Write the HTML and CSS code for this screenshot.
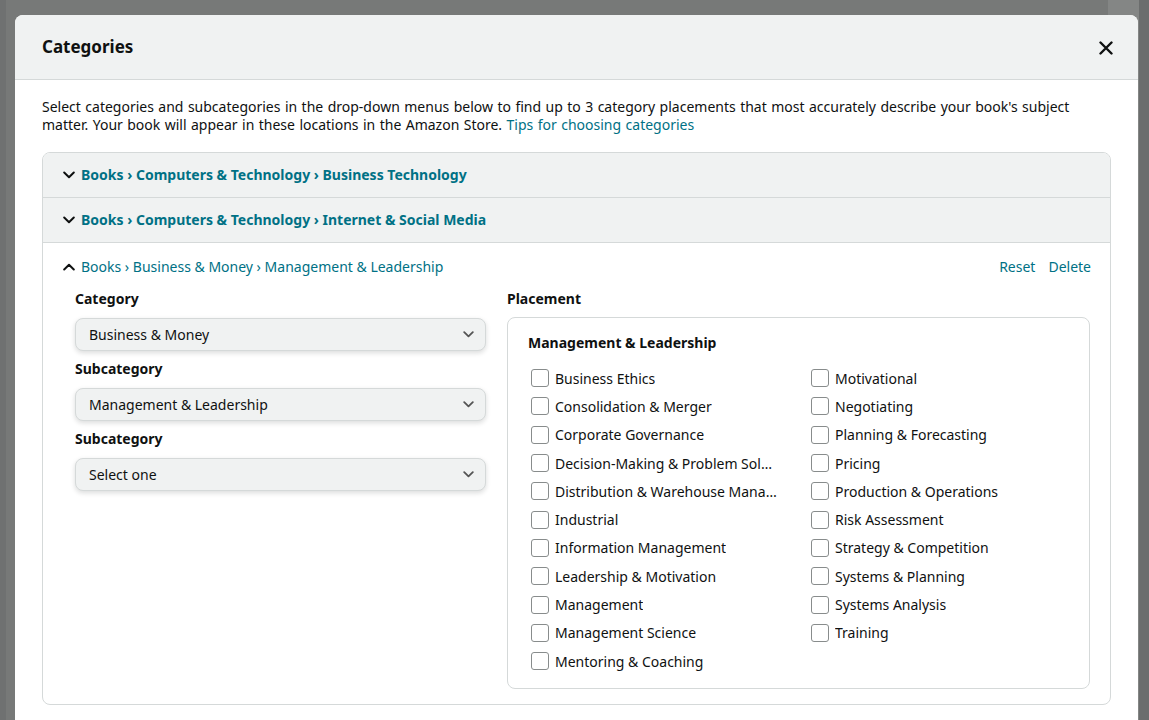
FILE: index.html
```html
<!DOCTYPE html>
<html lang="en">
<head>
<meta charset="utf-8">
<title>Categories</title>
<link rel="stylesheet" href="styles.css">
</head>
<body>
<div class="modal">
  <div class="modal-header">
    <h2 class="modal-title">Categories</h2>
    <button class="close-btn" aria-label="Close">
      <svg width="14" height="14" viewBox="0 0 14 14"><path d="M1.5 1.5 L12.5 12.5 M12.5 1.5 L1.5 12.5" stroke="#0f1111" stroke-width="2.4" stroke-linecap="round" fill="none"/></svg>
    </button>
  </div>
  <div class="modal-body">
    <p class="intro">Select categories and subcategories in the drop-down menus below to find up to 3 category placements that most accurately describe your book's subject matter. Your book will appear in these locations in the Amazon Store. <a href="#" class="link">Tips for choosing categories</a></p>

    <div class="accordion">
      <div class="acc-row">
        <svg class="chev" width="12" height="8" viewBox="0 0 12 8"><path d="M1.2 1.5 L6 6.2 L10.8 1.5" stroke="#0f1111" stroke-width="2" fill="none" stroke-linecap="round" stroke-linejoin="round"/></svg>
        <span class="acc-title">Books › Computers &amp; Technology › Business Technology</span>
      </div>
      <div class="acc-row">
        <svg class="chev" width="12" height="8" viewBox="0 0 12 8"><path d="M1.2 1.5 L6 6.2 L10.8 1.5" stroke="#0f1111" stroke-width="2" fill="none" stroke-linecap="round" stroke-linejoin="round"/></svg>
        <span class="acc-title">Books › Computers &amp; Technology › Internet &amp; Social Media</span>
      </div>
      <div class="acc-open">
        <div class="open-head">
          <div class="open-title">
            <svg class="chev" width="12" height="8" viewBox="0 0 12 8"><path d="M1.2 6.5 L6 1.8 L10.8 6.5" stroke="#0f1111" stroke-width="2" fill="none" stroke-linecap="round" stroke-linejoin="round"/></svg>
            <span class="path">Books › Business &amp; Money › Management &amp; Leadership</span>
          </div>
          <div class="actions">
            <a href="#" class="link">Reset</a>
            <a href="#" class="link">Delete</a>
          </div>
        </div>
        <div class="open-body">
          <div class="selects">
            <div class="label">Category</div>
            <div class="select"><span>Business &amp; Money</span><svg width="11" height="7" viewBox="0 0 11 7"><path d="M1.2 1.2 L5.5 5.4 L9.8 1.2" stroke="#555" stroke-width="1.8" fill="none" stroke-linecap="round" stroke-linejoin="round"/></svg></div>
            <div class="label">Subcategory</div>
            <div class="select"><span>Management &amp; Leadership</span><svg width="11" height="7" viewBox="0 0 11 7"><path d="M1.2 1.2 L5.5 5.4 L9.8 1.2" stroke="#555" stroke-width="1.8" fill="none" stroke-linecap="round" stroke-linejoin="round"/></svg></div>
            <div class="label">Subcategory</div>
            <div class="select"><span>Select one</span><svg width="11" height="7" viewBox="0 0 11 7"><path d="M1.2 1.2 L5.5 5.4 L9.8 1.2" stroke="#555" stroke-width="1.8" fill="none" stroke-linecap="round" stroke-linejoin="round"/></svg></div>
          </div>
          <div class="placement">
            <div class="label">Placement</div>
            <div class="place-box">
              <div class="place-title">Management &amp; Leadership</div>
              <div class="cols">
                <div class="col">
                  <label class="cb"><span class="box"></span><span class="txt">Business Ethics</span></label>
                  <label class="cb"><span class="box"></span><span class="txt">Consolidation &amp; Merger</span></label>
                  <label class="cb"><span class="box"></span><span class="txt">Corporate Governance</span></label>
                  <label class="cb"><span class="box"></span><span class="txt">Decision-Making &amp; Problem Solving</span></label>
                  <label class="cb"><span class="box"></span><span class="txt">Distribution &amp; Warehouse Management</span></label>
                  <label class="cb"><span class="box"></span><span class="txt">Industrial</span></label>
                  <label class="cb"><span class="box"></span><span class="txt">Information Management</span></label>
                  <label class="cb"><span class="box"></span><span class="txt">Leadership &amp; Motivation</span></label>
                  <label class="cb"><span class="box"></span><span class="txt">Management</span></label>
                  <label class="cb"><span class="box"></span><span class="txt">Management Science</span></label>
                  <label class="cb"><span class="box"></span><span class="txt">Mentoring &amp; Coaching</span></label>
                </div>
                <div class="col">
                  <label class="cb"><span class="box"></span><span class="txt">Motivational</span></label>
                  <label class="cb"><span class="box"></span><span class="txt">Negotiating</span></label>
                  <label class="cb"><span class="box"></span><span class="txt">Planning &amp; Forecasting</span></label>
                  <label class="cb"><span class="box"></span><span class="txt">Pricing</span></label>
                  <label class="cb"><span class="box"></span><span class="txt">Production &amp; Operations</span></label>
                  <label class="cb"><span class="box"></span><span class="txt">Risk Assessment</span></label>
                  <label class="cb"><span class="box"></span><span class="txt">Strategy &amp; Competition</span></label>
                  <label class="cb"><span class="box"></span><span class="txt">Systems &amp; Planning</span></label>
                  <label class="cb"><span class="box"></span><span class="txt">Systems Analysis</span></label>
                  <label class="cb"><span class="box"></span><span class="txt">Training</span></label>
                </div>
              </div>
            </div>
          </div>
        </div>
      </div>
    </div>
  </div>
</div>
</body>
</html>
```

FILE: styles.css
```css
html, body {
  margin: 0;
  padding: 0;
}
body {
  background: linear-gradient(to right, #6f7171 0, #6f7171 6px, #777978 6px, #777978 1108px, #848685 1108px, #848685 1139px, #6b6d6d 1139px);
  font-family: "Noto Sans", "Open Sans", Arial, sans-serif;
  color: #0f1111;
  font-size: 14px;
  height: 720px;
  overflow: hidden;
}
.modal {
  margin: 15px 0 0 15px;
  width: 1123px;
  height: 740px;
  background: #ffffff;
  border-radius: 8px 8px 0 0;
  overflow: hidden;
}
.modal-header {
  height: 64px;
  background: #f0f2f2;
  border-bottom: 1px solid #d5d9d9;
  display: flex;
  align-items: center;
  justify-content: space-between;
  padding: 0 25px 0 27px;
}
.modal-title {
  margin: 0;
  font-size: 17px;
  font-weight: 700;
  line-height: 24px;
}
.close-btn {
  border: 0;
  background: none;
  padding: 0;
  width: 14px;
  height: 14px;
  display: flex;
  margin-top: 2px;
}
.modal-body {
  padding: 18px 27px 0 27px;
}
.intro {
  margin: 0 0 18px 0;
  line-height: 18px;
  word-spacing: 0.8px;
}
.link {
  color: #007185;
  text-decoration: none;
}
.accordion {
  border: 1px solid #d5d9d9;
  border-radius: 8px;
  overflow: hidden;
}
.acc-row {
  height: 43px;
  padding-bottom: 1px;
  background: #f0f2f2;
  border-bottom: 1px solid #d5d9d9;
  display: flex;
  align-items: center;
  padding-left: 20px;
  gap: 6px;
}
.chev {
  flex: none;
}
.acc-title {
  color: #007185;
  font-weight: 700;
}
.acc-open {
  padding: 14px 19px 15px 20px;
}
.open-head {
  display: flex;
  justify-content: space-between;
  align-items: center;
  line-height: 20px;
}
.open-title {
  display: flex;
  align-items: center;
  gap: 6px;
}
.path {
  color: #007185;
}
.actions {
  display: flex;
  gap: 13px;
}
.open-body {
  display: flex;
  gap: 21px;
  margin: 12px 1px 0 12px;
}
.selects {
  width: 411px;
  flex: none;
}
.label {
  font-weight: 700;
  line-height: 20px;
  margin-bottom: 9px;
}
.select {
  box-sizing: border-box;
  height: 33px;
  background: #f0f2f2;
  border: 1px solid #d5d9d9;
  border-radius: 8px;
  box-shadow: 0 2px 5px rgba(15, 17, 17, 0.15);
  display: flex;
  align-items: center;
  justify-content: space-between;
  padding: 0 11px 0 13px;
  margin-bottom: 8px;
}
.placement {
  flex: 1;
  min-width: 0;
}
.placement .label {
  margin-bottom: 8px;
}
.place-box {
  border: 1px solid #d5d9d9;
  border-radius: 8px;
  padding: 15px 20px 13px 20px;
}
.place-title {
  font-weight: 700;
  line-height: 19px;
  margin-bottom: 12px;
}
.cols {
  display: flex;
  padding-left: 3px;
}
.col {
  width: 280px;
  flex: none;
  display: flex;
  flex-direction: column;
}
.col + .col {
  flex: 1;
  width: auto;
}
.cb {
  height: 28.3px;
  display: flex;
  align-items: center;
  gap: 6px;
}
.box {
  flex: none;
  width: 16px;
  height: 16px;
  border: 1px solid #888c8c;
  border-radius: 3px;
  background: #fff;
}
.txt {
  white-space: nowrap;
  overflow: hidden;
  text-overflow: ellipsis;
  max-width: 224px;
}
```
